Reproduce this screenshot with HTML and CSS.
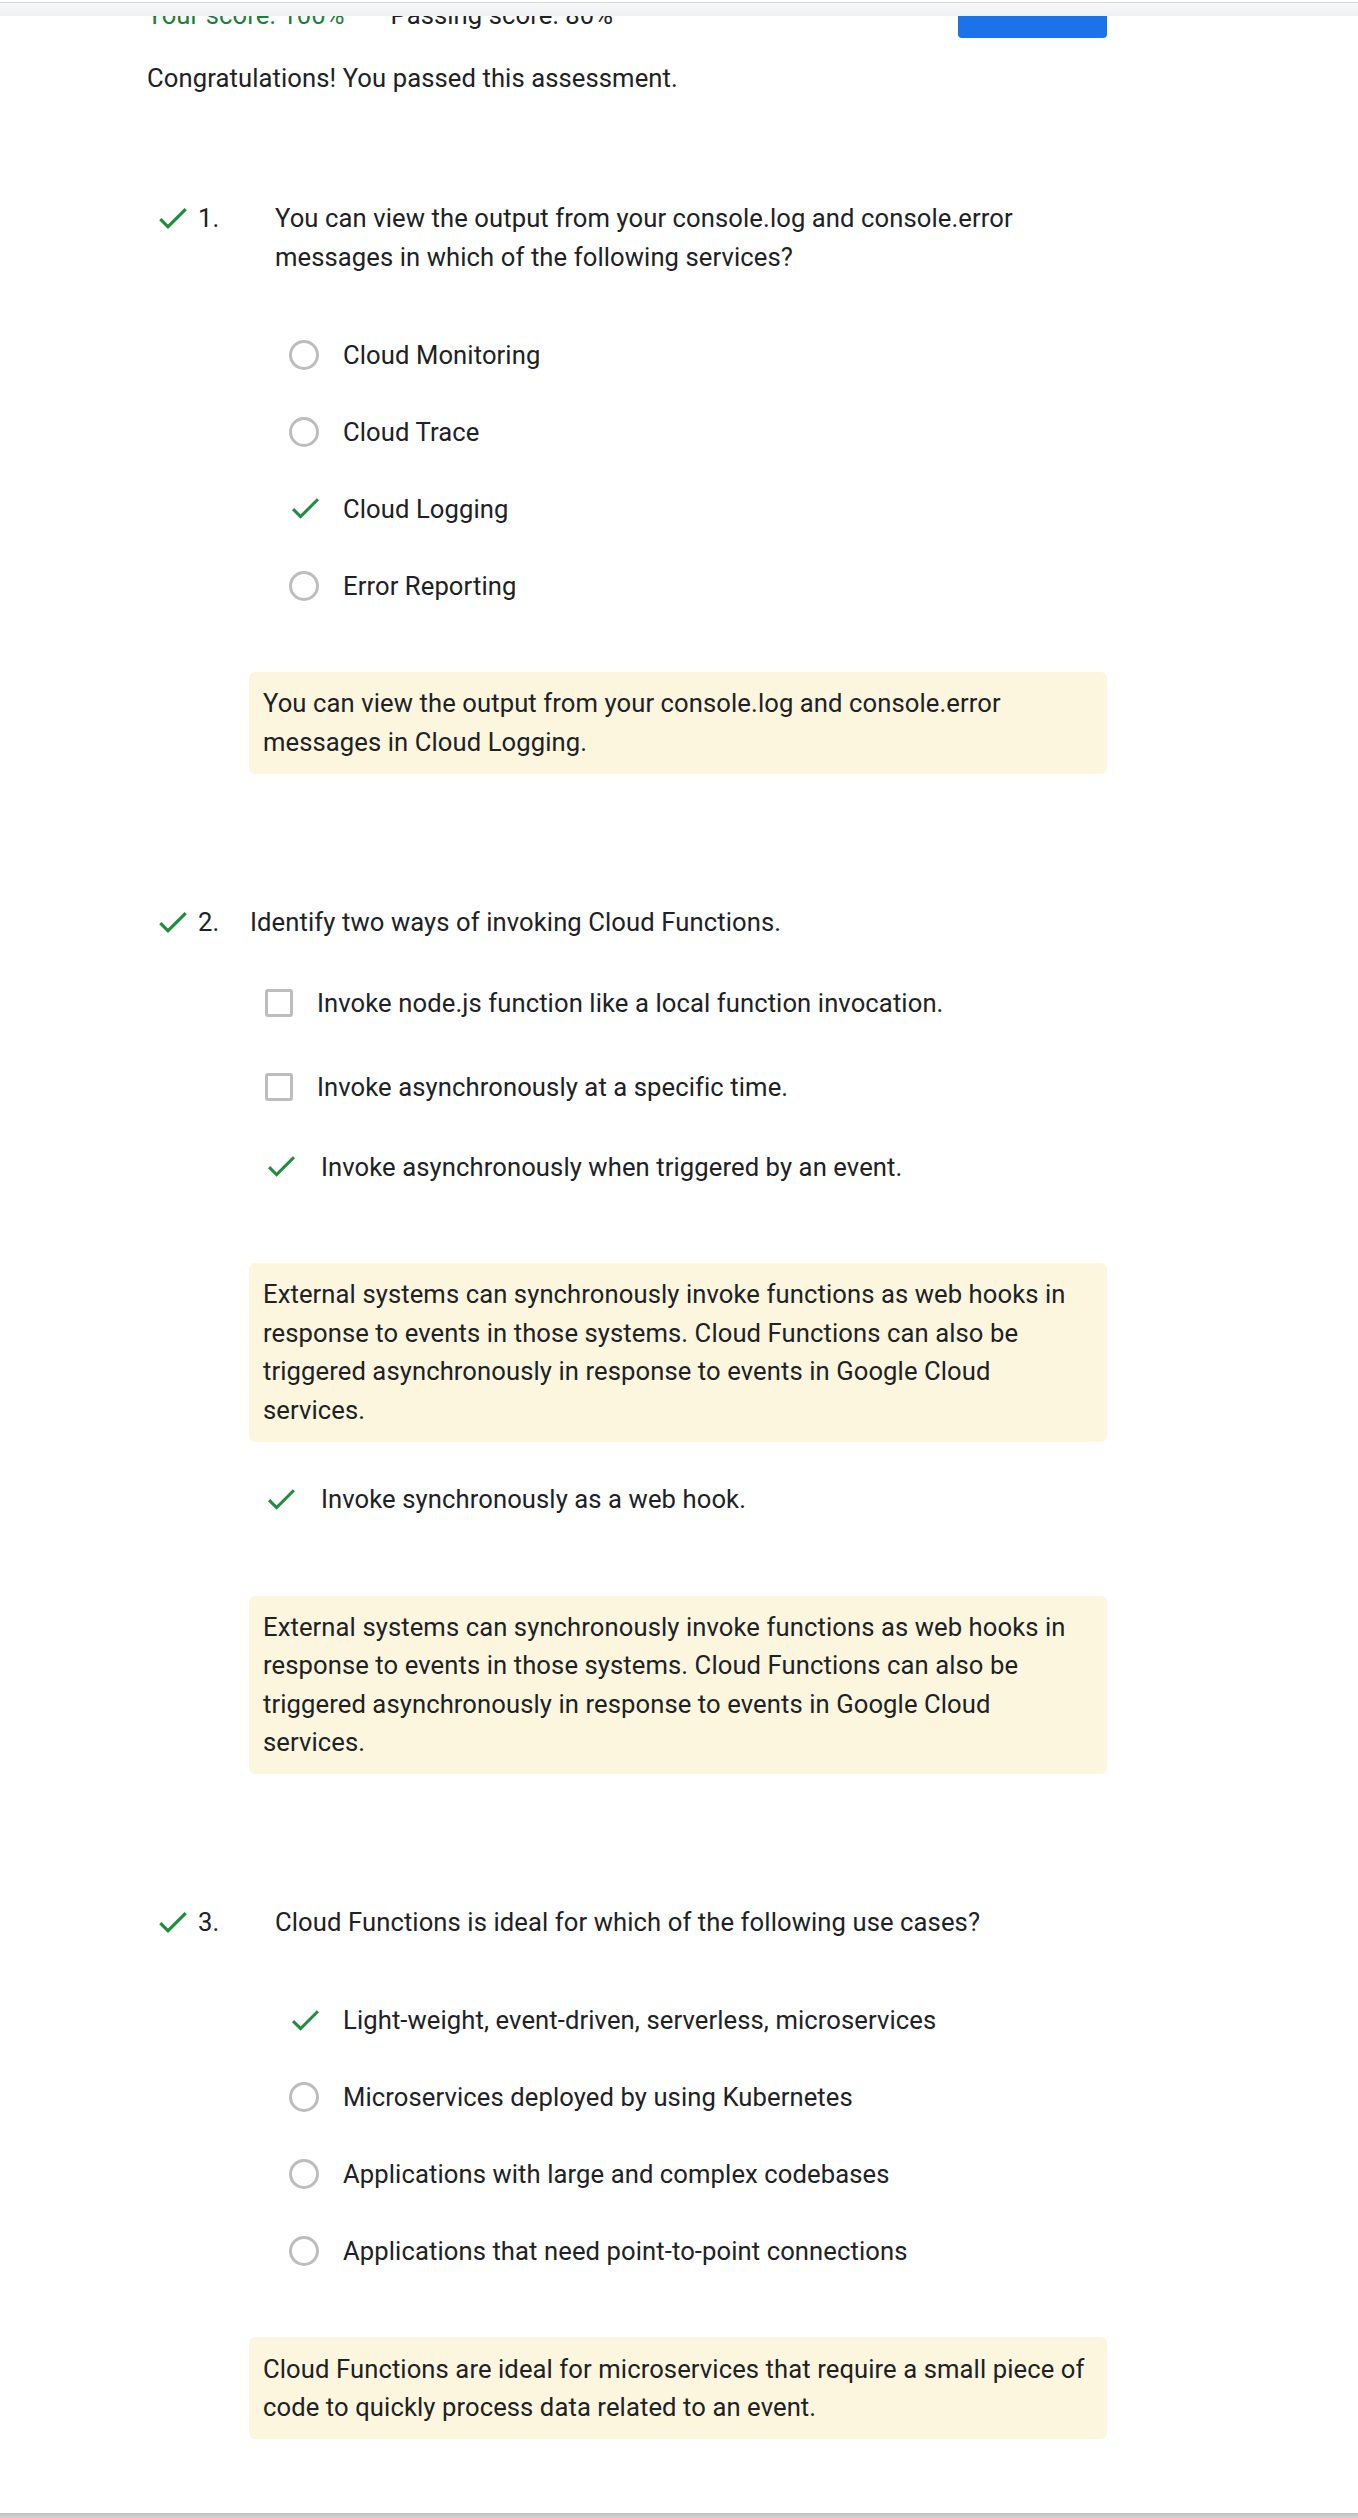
FILE: index.html
```
<!DOCTYPE html>
<html lang="en">
<head>
<meta charset="utf-8">
<title>Assessment results</title>
<link rel="stylesheet" href="styles.css">
</head>
<body>
<div class="topbar"></div>
<main class="page">
  <header class="score-row">
    <div class="scores">
      <span class="score-yours">Your score: 100%</span>
      <span class="score-pass">Passing score: 80%</span>
    </div>
    <button class="retake" type="button">Retake</button>
  </header>
  <p class="congrats">Congratulations! You passed this assessment.</p>

  <div class="quiz">
    <section class="question">
      <div class="q-head">
        <svg class="q-check" viewBox="3.4 5.6 17.6 13.4" aria-hidden="true"><path d="M9 16.17L4.83 12l-1.42 1.41L9 19 21 7l-1.41-1.41z"/></svg>
        <span class="q-num">1.</span>
        <p class="q-text">You can view the output from your console.log and console.error messages in which of the following services?</p>
      </div>
      <ul class="options">
        <li class="option"><span class="opt-icon"><span class="radio"></span></span><span class="opt-label">Cloud Monitoring</span></li>
        <li class="option"><span class="opt-icon"><span class="radio"></span></span><span class="opt-label">Cloud Trace</span></li>
        <li class="option"><span class="opt-icon"><svg class="opt-check" viewBox="3.4 5.6 17.6 13.4" aria-hidden="true"><path d="M9 16.17L4.83 12l-1.42 1.41L9 19 21 7l-1.41-1.41z"/></svg></span><span class="opt-label">Cloud Logging</span></li>
        <li class="option"><span class="opt-icon"><span class="radio"></span></span><span class="opt-label">Error Reporting</span></li>
      </ul>
      <div class="feedback">You can view the output from your console.log and console.error messages in Cloud Logging.</div>
    </section>

    <section class="question question-multi">
      <div class="q-head">
        <svg class="q-check" viewBox="3.4 5.6 17.6 13.4" aria-hidden="true"><path d="M9 16.17L4.83 12l-1.42 1.41L9 19 21 7l-1.41-1.41z"/></svg>
        <span class="q-num">2.</span>
        <p class="q-text">Identify two ways of invoking Cloud Functions.</p>
      </div>
      <ul class="options">
        <li class="option"><span class="checkbox"></span><span class="opt-label">Invoke node.js function like a local function invocation.</span></li>
        <li class="option"><span class="checkbox"></span><span class="opt-label">Invoke asynchronously at a specific time.</span></li>
        <li class="answer">
          <div class="option"><span class="opt-icon"><svg class="opt-check" viewBox="3.4 5.6 17.6 13.4" aria-hidden="true"><path d="M9 16.17L4.83 12l-1.42 1.41L9 19 21 7l-1.41-1.41z"/></svg></span><span class="opt-label">Invoke asynchronously when triggered by an event.</span></div>
          <div class="feedback">External systems can synchronously invoke functions as web hooks in response to events in those systems. Cloud Functions can also be triggered asynchronously in response to events in Google Cloud services.</div>
        </li>
        <li class="answer">
          <div class="option"><span class="opt-icon"><svg class="opt-check" viewBox="3.4 5.6 17.6 13.4" aria-hidden="true"><path d="M9 16.17L4.83 12l-1.42 1.41L9 19 21 7l-1.41-1.41z"/></svg></span><span class="opt-label">Invoke synchronously as a web hook.</span></div>
          <div class="feedback">External systems can synchronously invoke functions as web hooks in response to events in those systems. Cloud Functions can also be triggered asynchronously in response to events in Google Cloud services.</div>
        </li>
      </ul>
    </section>

    <section class="question">
      <div class="q-head">
        <svg class="q-check" viewBox="3.4 5.6 17.6 13.4" aria-hidden="true"><path d="M9 16.17L4.83 12l-1.42 1.41L9 19 21 7l-1.41-1.41z"/></svg>
        <span class="q-num">3.</span>
        <p class="q-text">Cloud Functions is ideal for which of the following use cases?</p>
      </div>
      <ul class="options">
        <li class="option"><span class="opt-icon"><svg class="opt-check" viewBox="3.4 5.6 17.6 13.4" aria-hidden="true"><path d="M9 16.17L4.83 12l-1.42 1.41L9 19 21 7l-1.41-1.41z"/></svg></span><span class="opt-label">Light-weight, event-driven, serverless, microservices</span></li>
        <li class="option"><span class="opt-icon"><span class="radio"></span></span><span class="opt-label">Microservices deployed by using Kubernetes</span></li>
        <li class="option"><span class="opt-icon"><span class="radio"></span></span><span class="opt-label">Applications with large and complex codebases</span></li>
        <li class="option"><span class="opt-icon"><span class="radio"></span></span><span class="opt-label">Applications that need point-to-point connections</span></li>
      </ul>
      <div class="feedback">Cloud Functions are ideal for microservices that require a small piece of code to quickly process data related to an event.</div>
    </section>
  </div>
</main>
<div class="bottombar"></div>
</body>
</html>
```

FILE: styles.css
```
* { box-sizing: border-box; }

html, body {
  margin: 0;
  padding: 0;
  background: #ffffff;
}

body {
  font-family: Roboto, "Liberation Sans", Arial, sans-serif;
  font-size: 25.6px;
  line-height: 38.4px;
  letter-spacing: 0.1px;
  color: #202124;
}

.topbar {
  position: fixed;
  top: 0;
  left: 0;
  right: 0;
  height: 16px;
  z-index: 10;
  background: linear-gradient(to bottom, #ffffff 0, #ffffff 2px, #d4d6d9 2px, #d4d6d9 3px, #f7f8f9 3px, #eef0f2 16px);
}

.bottombar {
  position: fixed;
  left: 0;
  right: 0;
  bottom: 0;
  height: 5px;
  z-index: 10;
  background: linear-gradient(to bottom, #bcbcbc, #d6d6d6);
}

.page {
  width: 1107px;
  padding-left: 147px;
}

.score-row {
  display: flex;
  justify-content: space-between;
  align-items: flex-start;
  margin-top: -3px;
  height: 41px;
}

.scores {
  display: flex;
  gap: 46px;
  line-height: 36px;
}

.score-yours { color: #188038; }
.score-pass { color: #202124; }

.retake {
  width: 149px;
  height: 41px;
  border: none;
  border-radius: 4px;
  background: #1a73e8;
  color: #ffffff;
  font-family: inherit;
  font-size: 16px;
  padding: 0 0 26px;
}

.congrats {
  margin: 21px 0 0;
}

.quiz {
  margin-top: 102px;
  display: flex;
  flex-direction: column;
  gap: 129px;
}

.question { margin: 0; }

.q-head {
  display: flex;
  align-items: flex-start;
  padding-left: 12px;
}

.q-check {
  flex: none;
  width: 28px;
  height: 21px;
  margin-top: 9px;
  fill: #1e8e3e;
}

.q-num {
  flex: none;
  width: 77px;
  margin-left: 11px;
}

.question-multi .q-num { width: 52px; }

.q-text {
  flex: 1;
  margin: 0;
}

.options {
  list-style: none;
  margin: 40px 0 0;
  padding: 0;
}

.option {
  display: flex;
  align-items: center;
  gap: 24px;
  height: 77px;
  padding-left: 142px;
}

.opt-icon {
  flex: none;
  width: 30px;
  height: 30px;
  display: flex;
  align-items: center;
  justify-content: center;
}

.radio {
  width: 30px;
  height: 30px;
  border: 3px solid #bdbdbd;
  border-radius: 50%;
}

.opt-check {
  width: 27px;
  height: 21px;
  margin-left: 2px;
  fill: #1e8e3e;
}

.feedback {
  margin-top: 47.5px;
  margin-left: 102px;
  padding: 12.5px 16px 12.5px 14px;
  background: #fdf6df;
  border-radius: 6px;
}

/* multi-select question */
.question-multi .options { margin-top: 20px; }

.question-multi .option {
  height: 84px;
  padding-left: 118px;
}

.checkbox {
  flex: none;
  width: 28px;
  height: 28px;
  border: 3px solid #bdbdbd;
  border-radius: 3px;
}

.question-multi .answer .option {
  height: 76px;
}

.question-multi .answer .opt-icon {
  width: 32px;
  justify-content: flex-start;
}

.question-multi .answer .opt-check {
  margin-left: 3px;
}

.question-multi .answer .feedback {
  margin-top: 58px;
}

.question-multi .answer + .answer {
  margin-top: 20px;
}
```
